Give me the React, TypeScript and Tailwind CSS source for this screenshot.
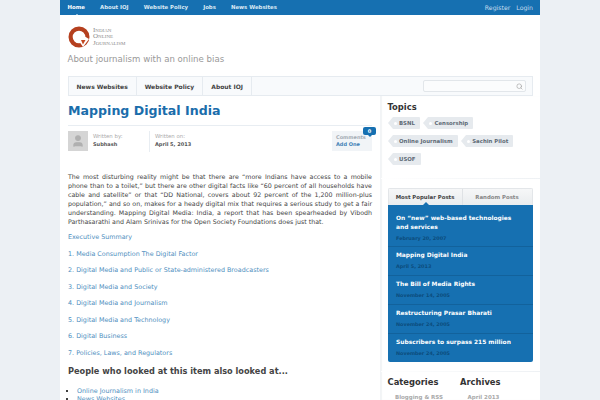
import { Search, User } from "lucide-react"

const NAV = ["Home", "About IOJ", "Website Policy", "Jobs", "News Websites"]
const SUBNAV = ["News Websites", "Website Policy", "About IOJ"]
const LINKS = [
  "Executive Summary",
  "1. Media Consumption The Digital Factor",
  "2. Digital Media and Public or State-administered Broadcasters",
  "3. Digital Media and Society",
  "4. Digital Media and Journalism",
  "5. Digital Media and Technology",
  "6. Digital Business",
  "7. Policies, Laws, and Regulators",
]
const POSTS = [
  { title: "On \u201cnew\u201d web-based technologies and services", date: "February 20, 2007" },
  { title: "Mapping Digital India", date: "April 5, 2013" },
  { title: "The Bill of Media Rights", date: "November 14, 2005" },
  { title: "Restructuring Prasar Bharati", date: "November 24, 2005" },
  { title: "Subscribers to surpass 215 million", date: "November 24, 2005" },
]

function Tag({ label }: { label: string }) {
  return (
    <span className="relative ml-[5px] flex h-[12px] items-center rounded-r-[1px] bg-[#e6eaee] pl-[1px] pr-[5px] text-[5.4px] font-bold text-[#5f6b76]">
      <span className="absolute left-[-5px] top-0 h-0 w-0 border-y-[6px] border-r-[5px] border-y-transparent border-r-[#e6eaee]" />
      <span className="mr-[2.5px] h-[3px] w-[3px] rounded-full bg-white" />
      {label}
    </span>
  )
}

function Logo() {
  return (
    <div className="flex items-center gap-[3.5px]">
      <svg width="22" height="22" viewBox="0 0 22 22">
        <circle cx="11" cy="11" r="8.4" fill="none" stroke="#b5401f" strokeWidth="4.2" />
        <path d="M11 7 L21 13 L15 21 L11 15 Z" fill="#fff" />
        <path d="M13 14 L17.5 14 L15 18.5 Z" fill="#c4471f" />
      </svg>
      <div className="font-['Liberation_Serif',serif] text-[7px] leading-[6.6px] text-[#8b8b8b] [font-variant:small-caps]">
        <div>Indian</div>
        <div>Online</div>
        <div>Journalism</div>
      </div>
    </div>
  )
}

export default function App() {
  return (
    <div className="flex h-[400px] justify-center overflow-hidden bg-[#ecf0f4] font-['DejaVu_Sans',sans-serif]">
      <div className="flex w-[480px] flex-col bg-white">
        {/* top bar */}
        <div className="flex h-[15px] shrink-0 items-center justify-between bg-[#1670b1] pl-[7.5px] pr-[7px]">
          <div className="flex gap-[15px] text-[5.4px] font-bold text-[#dbe9f4]">
            {NAV.map((item, i) => (
              <span key={item} className={i === 0 ? "relative text-white" : ""}>
                {item}
                {i === 0 && (
                  <span className="absolute bottom-[-5px] left-[6px] h-0 w-0 border-x-[3px] border-b-[3px] border-x-transparent border-b-white" />
                )}
              </span>
            ))}
          </div>
          <div className="flex gap-[6px] text-[6.2px] text-[#c5dcee]">
            <span>Register</span>
            <span>Login</span>
          </div>
        </div>

        {/* header */}
        <div className="flex h-[61px] shrink-0 flex-col px-[7.5px] pt-[10.5px]">
          <Logo />
          <div className="mt-[5px] text-[8.6px] leading-[12px] text-[#999]">About journalism with an online bias</div>
        </div>

        {/* sub nav */}
        <div className="mx-[7.5px] flex h-[20px] shrink-0 items-center justify-between border border-[#e6ebf0] bg-[#f8fafc] pr-[6px]">
          <div className="flex h-full">
            {SUBNAV.map((item) => (
              <span key={item} className="flex items-center border-r border-[#e6ebf0] px-[8px] text-[6px] font-bold text-[#444]">
                {item}
              </span>
            ))}
          </div>
          <div className="flex h-[12px] w-[103px] items-center justify-end rounded-[2px] border border-[#e2e6ea] bg-[#fbfcfd] pr-[2px]">
            <Search size={7} className="text-[#999]" />
          </div>
        </div>

        <div className="flex min-h-0 flex-1">
          {/* article */}
          <div className="w-[320px] shrink-0 pl-[8px] pr-[8px]">
            <h1 className="mt-[5px] text-[12.6px] font-bold leading-[20px] text-[#1a6dab]">Mapping Digital India</h1>
            <div className="mt-[4px] flex h-[27px] border-t border-[#e8edf2] pt-[5px]">
              <div className="flex w-[82px] border-r border-[#e8edf2]">
                <div className="flex h-[20px] w-[20px] items-center justify-center bg-[#d5d5d5]">
                  <User size={14} className="fill-[#b0b0b0] text-[#b0b0b0]" />
                </div>
                <div className="ml-[5px] leading-[7px]">
                  <div className="mt-[2px] text-[5.4px] text-[#aaa]">Written by:</div>
                  <div className="mt-[1px] text-[5px] font-bold text-[#555]">Subhash</div>
                </div>
              </div>
              <div className="ml-[5px] flex-1 leading-[7px]">
                <div className="mt-[2px] text-[5.4px] text-[#aaa]">Written on:</div>
                <div className="mt-[1px] text-[5px] font-bold text-[#555]">April 5, 2013</div>
              </div>
              <div className="relative h-[20px] w-[40px] bg-[#f1f4f7] pl-[4px] text-[5px] leading-[7px]">
                <div className="mt-[3px] font-bold text-[#a5adb5]">Comments</div>
                <div className="font-bold text-[#3f80b5]">Add One</div>
                <span className="absolute right-[-4px] top-[-4px] flex h-[8px] w-[13px] items-center justify-center rounded-[2px] bg-[#1670b1] text-[5px] font-bold text-white">
                  0
                  <span className="absolute bottom-[-2px] left-[5px] h-0 w-0 border-x-[2px] border-t-[2px] border-x-transparent border-t-[#1670b1]" />
                </span>
              </div>
            </div>

            <p className="mt-[20px] text-justify text-[6.3px] leading-[9px] text-[#444]">
              The most disturbing reality might be that there are “more Indians have access to a mobile phone than to a toilet,” but there are other digital facts like “60 percent of all households have cable and satellite” or that “DD National, covers about 92 percent of the 1,200 million-plus population,” and so on, makes for a heady digital mix that requires a serious study to get a fair understanding. Mapping Digital Media: India, a report that has been spearheaded by Vibodh Parthasarathi and Alam Srinivas for the Open Society Foundations does just that.
            </p>
            <div className="mt-[7px] flex flex-col gap-[7.5px]">
              {LINKS.map((link) => (
                <a key={link} className="h-[9px] text-[6.4px] leading-[9px] text-[#4f8fc0]">
                  {link}
                </a>
              ))}
            </div>
            <h2 className="mt-[7px] text-[8.2px] font-bold leading-[12px] text-[#444]">People who looked at this item also looked at...</h2>
            <ul className="ml-[9px] mt-[10px] list-disc text-[6.4px] leading-[8px] text-[#4f8fc0] marker:text-black">
              <li>Online Journalism in India</li>
              <li>News Websites</li>
            </ul>
          </div>

          {/* sidebar */}
          <div className="flex-1 bg-white pl-[7.5px] shadow-[inset_2px_0_1px_#f2f4f6]">
            <div className="h-[82px] pt-[6px]">
              <h3 className="text-[8.4px] font-bold leading-[10px] text-[#333]">Topics</h3>
              <div className="mt-[5px] flex w-[140px] flex-wrap gap-x-[3px] gap-y-[6px]">
                <Tag label="BSNL" />
                <Tag label="Censorship" />
                <Tag label="Online Journalism" />
                <Tag label="Sachin Pilot" />
                <Tag label="USOF" />
              </div>
            </div>
            <div className="mb-[9px] ml-[-7px] h-px bg-gradient-to-r from-white to-[#eef1f4]" />

            <div className="w-[145px] overflow-hidden rounded-[2px]">
              <div className="flex h-[17px] border border-b-0 border-[#e3e6e9] bg-gradient-to-b from-[#f6f7f8] to-[#e9ecee] text-[5.4px] font-bold">
                <span className="relative flex w-[74px] items-center justify-center border-r border-[#dfe2e5] text-[#444]">
                  Most Popular Posts
                  <span className="absolute bottom-0 left-[34px] h-0 w-0 border-x-[3px] border-b-[3px] border-x-transparent border-b-[#1670b1]" />
                </span>
                <span className="flex flex-1 items-center justify-center text-[#888]">Random Posts</span>
              </div>
              <div className="bg-[#1670b1] pt-[3px]">
                {POSTS.map((post, i) => (
                  <div key={post.title} className={i === 0 ? "px-[8.5px] pb-[4px] pt-[5.5px]" : "border-t border-[#12629c] px-[8.5px] pb-[4.5px] pt-[4.5px]"}>
                    <div className="text-[5.9px] font-bold leading-[9px] text-white">{post.title}</div>
                    <div className="mt-[2px] text-[4.9px] font-bold leading-[8px] text-[#0c4c7c]">{post.date}</div>
                  </div>
                ))}
              </div>
            </div>

            <div className="mb-[5px] ml-[-7px] mt-[9px] h-px bg-gradient-to-r from-white to-[#eef1f4]" />
            <div className="flex">
              <div className="w-[72.5px]">
                <h3 className="text-[8.4px] font-bold leading-[10px] text-[#333]">Categories</h3>
                <div className="ml-[7.5px] mt-[6px] text-[5.5px] font-bold leading-[8px] text-[#aaa]">Blogging &amp; RSS</div>
              </div>
              <div>
                <h3 className="text-[8.4px] font-bold leading-[10px] text-[#333]">Archives</h3>
                <div className="ml-[7.5px] mt-[6px] text-[5.5px] font-bold leading-[8px] text-[#aaa]">April 2013</div>
              </div>
            </div>
          </div>
        </div>
      </div>
    </div>
  )
}
